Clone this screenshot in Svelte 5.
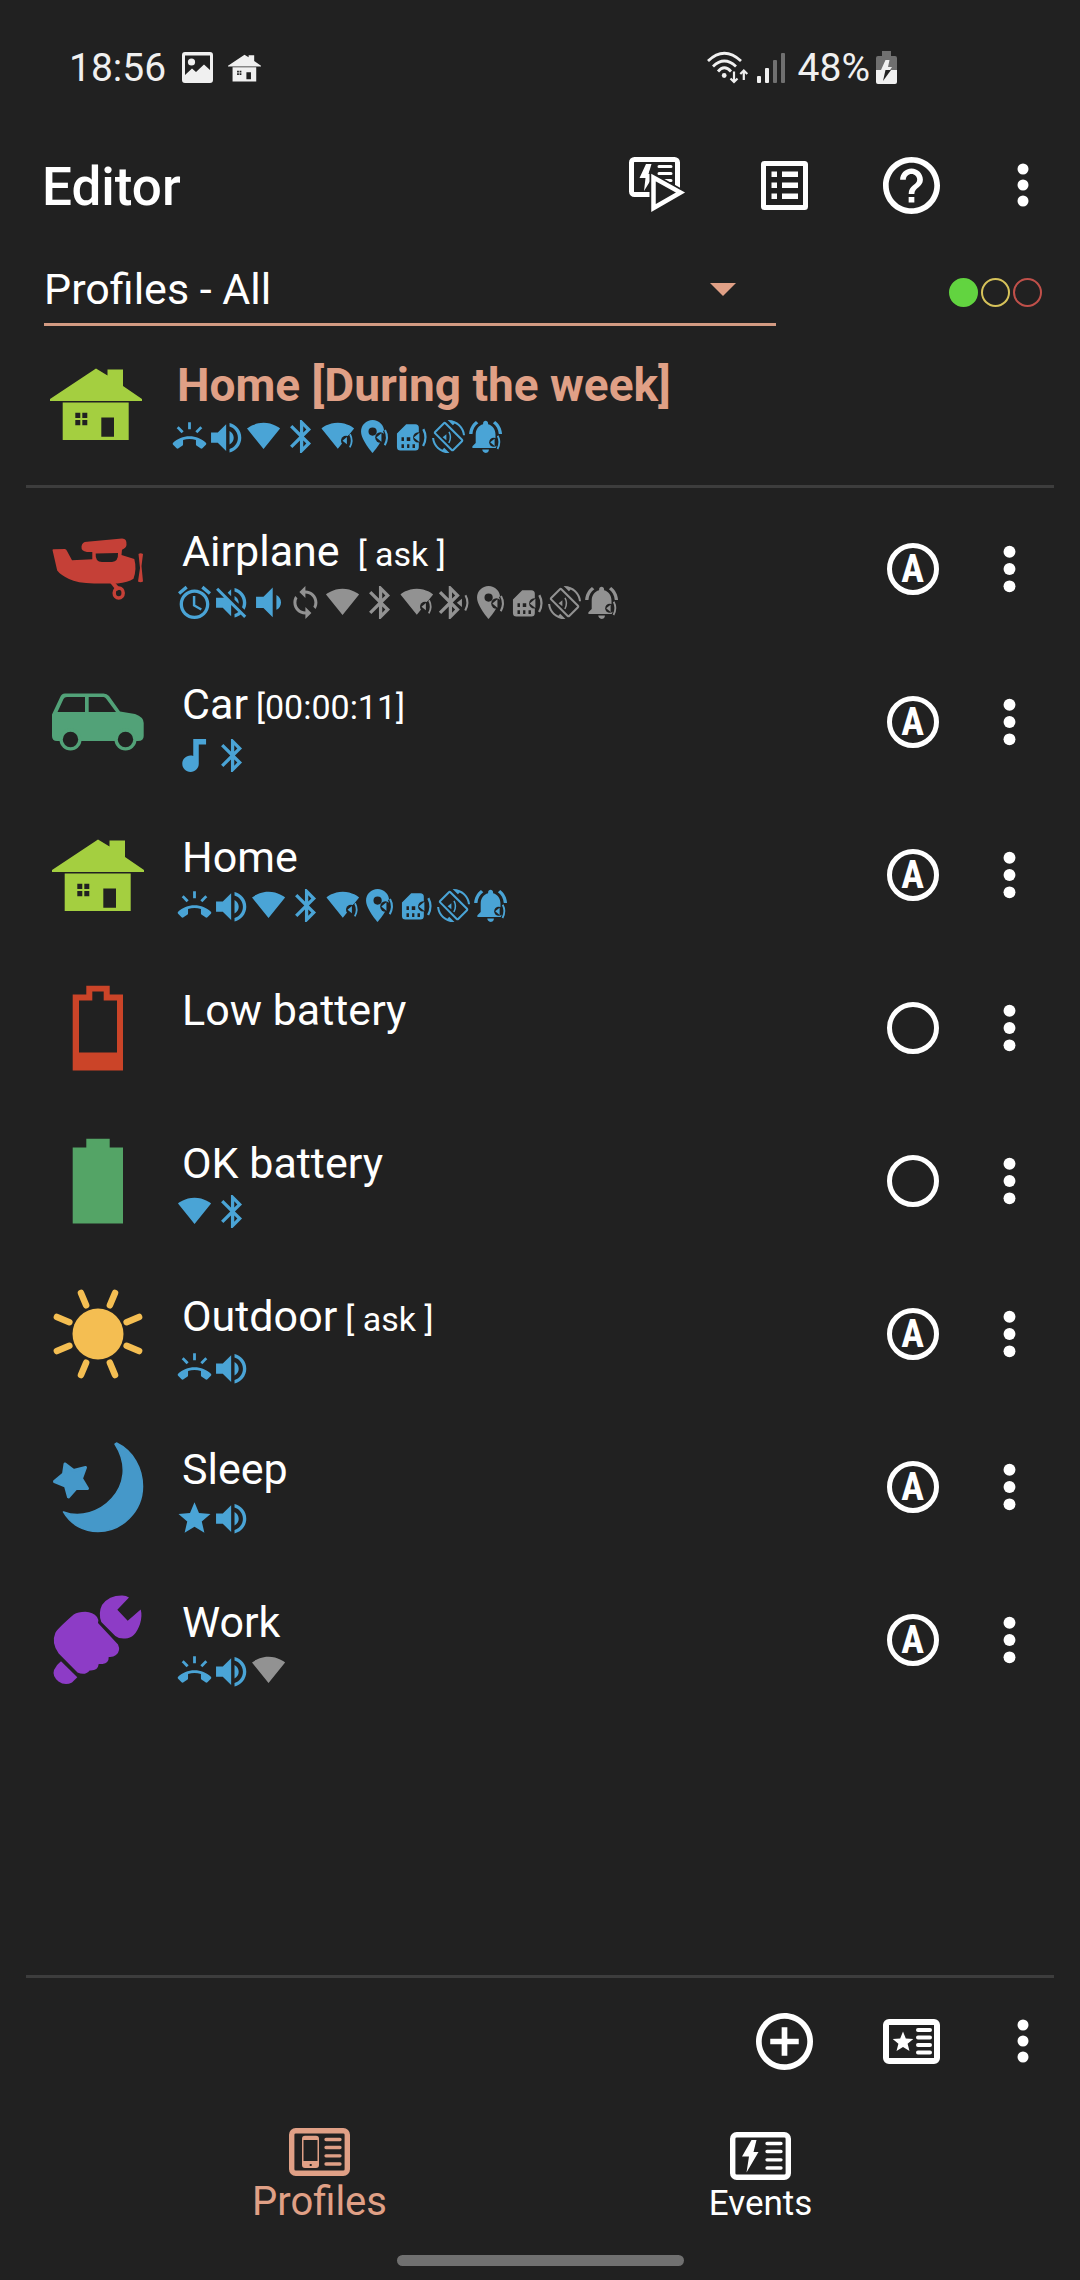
<script>
  // Indicator glyphs: path on a 24-unit grid, scaled by s and moved by x/y inside a 37x34 cell.
  // "sound" places the small speaker overlay that marks on/off parameters.
  const bluetoothPath =
    'M17.71 7.71L12 2h-1v7.59L6.41 5 5 6.41 10.59 12 5 17.59 6.41 19 11 14.41V22h1l5.71-5.71-4.3-4.29 4.3-4.29zM13 5.83l1.88 1.88L13 9.59V5.83zm1.88 10.46L13 18.17v-3.76l1.88 1.88z';
  const wifiPath =
    'M12.01 21.49L23.64 7c-.45-.34-4.93-4-11.64-4C5.28 3 .81 6.66.36 7l11.63 14.49.01.01.01-.01z';

  const glyphs = {
    ring: {
      d: 'M23.71 16.67C20.66 13.78 16.54 12 12 12 7.46 12 3.34 13.78.29 16.67c-.18.18-.29.43-.29.71 0 .28.11.53.29.71l2.48 2.48c.18.18.43.29.71.29.27 0 .52-.11.7-.28.79-.74 1.69-1.36 2.66-1.85.33-.16.56-.5.56-.9v-3.1c1.45-.48 3-.73 4.6-.73s3.15.25 4.6.72v3.1c0 .39.23.74.56.9.98.49 1.87 1.12 2.66 1.85.18.18.43.28.7.28.28 0 .53-.11.71-.29l2.48-2.48c.18-.18.29-.43.29-.71 0-.28-.12-.52-.3-.7zM21.16 6.26l-1.41-1.41-3.56 3.55 1.41 1.41s3.45-3.52 3.56-3.55zM13 2h-2v5h2V2zM6.4 9.81L7.81 8.4 4.26 4.84 2.84 6.26c.11.03 3.56 3.55 3.56 3.55z',
      s: 1.4, x: 1.7, y: -0.5
    },
    volume: {
      d: 'M3 9v6h4l5 5V4L7 9H3zm13.5 3c0-1.77-1.02-3.29-2.5-4.03v8.05c1.48-.73 2.5-2.25 2.5-4.02zM14 3.23v2.06c2.89.86 5 3.54 5 6.71s-2.11 5.85-5 6.71v2.06c4.01-.91 7-4.49 7-8.77s-2.99-7.86-7-8.77z',
      s: 1.68, x: -2, y: -2.5
    },
    wifi: { d: wifiPath, s: 1.42, x: 1.5, y: -1.4 },
    bluetooth: { d: bluetoothPath, s: 1.65, x: -0.2, y: -3.3 },
    wifiSound: { d: wifiPath, s: 1.4, x: 2, y: -1.4, sound: { x: 24.5, y: 20.7, s: 1, cut: 5 } },
    bluetoothSound: { d: bluetoothPath, s: 1.65, x: -4.4, y: -3.3, sound: { x: 23, y: 16.8, s: 1.15, cut: 0 } },
    place: {
      d: 'M12 2C8.13 2 5 5.13 5 9c0 5.25 7 13 7 13s7-7.75 7-13c0-3.87-3.13-7-7-7zm0 9.5a2.5 2.5 0 010-5 2.5 2.5 0 010 5z',
      s: 1.65, x: -3.2, y: -3.3, sound: { x: 21.5, y: 17.5, s: 1.15, cut: 4.5 }
    },
    sim: {
      d: 'M6.3 2H11.5a2 2 0 012 2v11a2 2 0 01-2 2H3a2 2 0 01-2-2V7.3zM3.6 9.5v2.1h1.4V9.500zM6.600 9.500v2.1h2V9.500zM3.6 13.5V15.600h1.4v-2.1zM6.800 13.5V15.600h1.300v-2.1zM9.900 13.5V15.600h1.4v-2.1z',
      s: 1.75, x: 2.2, y: 0.7, sound: { x: 22, y: 17.4, s: 1.28, cut: 4 }
    },
    rotate: {
      d: 'M16.48 2.52c3.27 1.55 5.61 4.72 5.97 8.48h1.5C23.44 4.84 18.29 0 12 0l-.66.03 3.81 3.81 1.33-1.32zm-6.25-.77c-.59-.59-1.54-.59-2.12 0L1.75 8.11c-.59.59-.59 1.54 0 2.12l12.02 12.02c.59.59 1.54.59 2.12 0l6.36-6.36c.59-.59.59-1.54 0-2.12L10.23 1.75zm4.6 19.44L2.81 9.17l6.36-6.36 12.02 12.02-6.36 6.36zm-7.31.29C4.25 19.94 1.91 16.76 1.55 13H.05C.56 19.16 5.71 24 12 24l.66-.03-3.81-3.81-1.33 1.32z',
      s: 1.38, x: 2, y: 0, sound: { x: 13.5, y: 17.3, s: 0.85, cut: 0 }
    },
    bell: {
      d: 'M7.58 4.08L6.15 2.65C3.75 4.48 2.17 7.3 2.03 10.5h2c.15-2.65 1.51-4.97 3.55-6.42zm12.39 6.42h2c-.15-3.2-1.73-6.02-4.12-7.85l-1.42 1.43c2.02 1.45 3.39 3.77 3.54 6.42zM18 11c0-3.07-1.64-5.64-4.5-6.32V4c0-.83-.67-1.5-1.5-1.5s-1.5.67-1.5 1.5v.68C7.63 5.36 6 7.92 6 11v5l-2 2v1h16v-1l-2-2v-5zm-6 11c.14 0 .27-.01.4-.04.65-.14 1.18-.58 1.44-1.18.1-.24.15-.5.15-.78h-4c.01 1.1.9 2 2.01 2z',
      s: 1.65, x: -1.2, y: -3.4, sound: { x: 24.2, y: 22.3, s: 1, cut: 4.5 }
    },
    alarm: {
      d: 'M22 5.72l-4.6-3.86-1.29 1.53 4.6 3.86L22 5.72zM7.88 3.39L6.6 1.86 2 5.71l1.29 1.53 4.59-3.85zM12.5 8H11v6l4.75 2.85.75-1.23-4-2.37V8zM12 4c-4.97 0-9 4.03-9 9s4.02 9 9 9c4.97 0 9-4.03 9-9s-4.03-9-9-9zm0 16c-3.87 0-7-3.13-7-7s3.13-7 7-7 7 3.13 7 7-3.13 7-7 7z',
      s: 1.65, x: -1.3, y: -3.2
    },
    volumeOff: {
      d: 'M16.5 12c0-1.77-1.02-3.29-2.5-4.03v2.21l2.45 2.45c.03-.2.05-.41.05-.63zm2.5 0c0 .94-.2 1.82-.54 2.64l1.51 1.51C20.63 14.91 21 13.5 21 12c0-4.28-2.99-7.86-7-8.77v2.06c2.89.86 5 3.54 5 6.71zM4.27 3L3 4.27 7.73 9H3v6h4l5 5v-6.73l4.25 4.25c-.67.52-1.42.93-2.25 1.18v2.06c1.38-.31 2.63-.95 3.69-1.81L19.73 21 21 19.73l-9-9L4.27 3zM12 4L9.91 6.09 12 8.18V4z',
      s: 1.68, x: -2, y: -3.4
    },
    volumeLow: {
      d: 'M18.5 12c0-1.77-1.02-3.29-2.5-4.03v8.05c1.48-.73 2.5-2.25 2.5-4.02zM5 9v6h4l5 5V4L9 9H5z',
      s: 1.85, x: -3.2, y: -5.8
    },
    sync: {
      d: 'M12 4V1L8 5l4 4V6c3.31 0 6 2.69 6 6 0 1.01-.25 1.97-.7 2.8l1.46 1.46C19.54 15.03 20 13.57 20 12c0-4.42-3.58-8-8-8zm0 14c-3.31 0-6-2.69-6-6 0-1.01.25-1.97.7-2.8L5.24 7.74C4.46 8.97 4 10.43 4 12c0 4.42 3.58 8 8 8v3l4-4-4-4v3z',
      s: 1.5, x: 0.4, y: -1.5
    },
    music: {
      d: 'M12 3v9.26c-.5-.17-1-.26-1.5-.26C8 12 6 14 6 16.5S8 21 10.5 21s4.5-2 4.5-4.5V6h4V3h-7z',
      s: 1.83, x: -4.7, y: -5.5
    },
    star: {
      d: 'M12 17.27L18.18 21l-1.64-7.03L22 9.24l-7.19-.61L12 2 9.19 8.63 2 9.24l5.46 4.73L5.82 21z',
      s: 1.6, x: -0.7, y: -1.9
    }
  };

  const homeSet = ['ring', 'volume', 'wifi', 'bluetooth', 'wifiSound', 'place', 'sim', 'rotate', 'bell'];

  const profiles = [
    {
      name: 'Airplane', note: '[ ask ]', wide: true, icon: 'plane', auto: true,
      on: ['alarm', 'volumeOff', 'volumeLow'],
      off: ['sync', 'wifi', 'bluetooth', 'wifiSound', 'bluetoothSound', 'place', 'sim', 'rotate', 'bell']
    },
    { name: 'Car', note: '[00:00:11]', icon: 'car', auto: true, on: ['music', 'bluetooth'], off: [] },
    { name: 'Home', icon: 'house', auto: true, on: homeSet, off: [] },
    { name: 'Low battery', icon: 'low', auto: false, on: [], off: [] },
    { name: 'OK battery', icon: 'full', auto: false, on: ['wifi', 'bluetooth'], off: [] },
    { name: 'Outdoor', note: '[ ask ]', icon: 'sun', auto: true, on: ['ring', 'volume'], off: [] },
    { name: 'Sleep', icon: 'moon', auto: true, on: ['star', 'volume'], off: [] },
    { name: 'Work', icon: 'work', auto: true, on: ['ring', 'volume'], off: ['wifi'] }
  ];

  const rays = [22.5, 67.5, 112.5, 157.5, 202.5, 247.5, 292.5, 337.5];
</script>

{#snippet glyph(name, off)}
  {@const g = glyphs[name]}
  <svg class="glyph" class:off viewBox="0 0 37 34" aria-hidden="true">
    <path d={g.d} transform="translate({g.x} {g.y}) scale({g.s})" fill="currentColor" fill-rule="evenodd" />
    {#if g.sound}
      <g transform="translate({g.sound.x} {g.sound.y}) scale({g.sound.s})">
        {#if g.sound.cut}
          <circle class="cut" cx="2.5" cy="0" r={g.sound.cut} />
          <path class="halo" d="M6.5 -6.5Q10 0 6.3 6.7" />
        {/if}
        <path d="M-1 0L3.4 -3.6V3.6Z" fill="currentColor" />
        <path d="M6.5 -6.5Q10 0 6.3 6.7" fill="none" stroke="currentColor" stroke-width="1.8" />
      </g>
    {/if}
  </svg>
{/snippet}

{#snippet strip(on, off)}
  <div class="strip">
    {#each on as name}{@render glyph(name, false)}{/each}
    {#each off as name}{@render glyph(name, true)}{/each}
  </div>
{/snippet}

{#snippet picture(kind)}
  <svg class="picture {kind}" viewBox="0 0 92 92" aria-hidden="true">
    {#if kind === 'house'}
      <path d="M0 43v-2L46 10.5l11.5 7v-6H73V28l19 13v2z" />
      <path fill-rule="evenodd" d="M12.7 44.5h66V82h-66zM25.3 54.8v5.2h5v-5.2zM32.3 54.8v5.2h5v-5.2zM25.3 62v5.2h5V62zM32.3 62v5.2h5V62zM51.3 59.5v19.3H64V59.5z" />
    {:else if kind === 'plane'}
      <path fill-rule="evenodd" d="M.5 27Q.5 26 2 26.2L13 26Q14.500 26.500 15 28L20 37.2 40.300 36.300V29H35Q29 28 29.500 23.500T35 18.800L70 15.600Q75 15.500 74.500 22 74 25 70 26.800L69.500 32 82.300 36Q85 46 81.500 55.800 76 59.500 65.500 60.500H42Q25 60 17 56 8 51.500 5.200 47.500zM43.700 30.500Q43 39 50 39H60Q66.500 38.500 66 30z" />
      <path d="M86.500 31Q88.500 29.500 91 31L89.500 43 91 58.500Q88.500 60 86 58.500L88 45z" />
      <path d="M57.500 59l6 1 5 6-4 2z" />
      <ellipse cx="66.700" cy="70" rx="4.500" ry="5" fill="none" stroke="currentColor" stroke-width="3.500" />
    {:else if kind === 'car'}
      <path fill-rule="evenodd" d="M13 17.500H51.500Q55 17.500 57 20L68 35.500 83 38Q91.700 41 91.700 47V60Q91.700 65 86 65H5Q0 65 0 60V38.500L8 21.500Q9.500 17.500 13 17.500zM5.500 36H33V21H15Q12.500 21 11.500 23zM36.700 36H64L54 22.500Q53 21 51.500 21H36.700z" />
      <circle cx="18.500" cy="63.500" r="11" /><circle cx="73.500" cy="63.500" r="11" />
      <circle class="cut" cx="18.500" cy="63.500" r="7.700" /><circle class="cut" cx="73.500" cy="63.500" r="7.700" />
    {:else if kind === 'low'}
      <path fill-rule="evenodd" d="M34.300 3.800H57.700V12.500H71V88.500H20.700V12.500H34.300zM40.300 9.500V18.500H27V70.500H65V18.500H51.700V9.500z" />
    {:else if kind === 'full'}
      <path d="M34.300 3.800H57.700V12.500H71V88.500H20.700V12.500H34.300z" />
    {:else if kind === 'sun'}
      <circle cx="46" cy="46" r="25.500" />
      {#each rays as angle}
        <path d="M46 1.500V15" transform="rotate({angle} 46 46)" stroke="currentColor" stroke-width="6.500" stroke-linecap="round" />
      {/each}
    {:else if kind === 'moon'}
      <path d="M64.500 2C81 10 90.500 27 90.500 45.500 90.500 70 70 90.500 46 90.500 32 90.500 19 84 11.500 71 45 84 90 45 63 3z" stroke="currentColor" stroke-width="1.500" stroke-linejoin="round" />
      <path d="M2.500 40.500L11.500 33 13 23 21.500 29.500 33.500 26.500 29.500 37.500 35.500 47.500 24 47.500 16.500 56 13.500 45z" stroke="currentColor" stroke-width="3" stroke-linejoin="round" />
    {:else}
      <path d="M49.300 28Q46 19 50 11 57 1.500 70 1.600 74 1.500 77 3.500L65.300 15.800 75.700 26.800 88.700 15.500Q90.500 22 88 30 83 44.500 73.300 44.500 67 45 63.300 42z" />
      <path d="M33.300 17.800Q41 18 45 23 47 25.500 46 29L66 50.500Q69 57 64 61 61 63.500 56.700 63 57 69 50.500 70 47 70 46.700 70 46 77 37.700 76.500 33 82 25.500 78.500L6.700 59.500Q-1 49 3.300 39 5 35 21.700 20.500 26 17.800 33.300 17.800z" />
      <path d="M9 67.200L25.300 83.200 20 88.500Q13 92 6.500 87.500 0 82 2 76 4 71 9 67.200z" />
    {/if}
  </svg>
{/snippet}

{#snippet dots()}
  <svg class="dots" viewBox="0 0 12 48" aria-hidden="true">
    <circle cx="6" cy="8" r="5.500" /><circle cx="6" cy="24" r="5.500" /><circle cx="6" cy="40" r="5.500" />
  </svg>
{/snippet}

<div class="app">
  <div class="status">
    <span>18:56</span>
    <svg class="photo" viewBox="0 0 31 31" aria-hidden="true">
      <path fill-rule="evenodd" d="M3 0H28Q31 0 31 3V28Q31 31 28 31H3Q0 31 0 28V3Q0 0 3 0zM3 3.500V23L10 16.500 14 20 22 12.500 28 18V3.500z" />
      <circle cx="9.500" cy="10" r="3.600" />
    </svg>
    <svg class="mini" viewBox="0 0 92 92" aria-hidden="true">
      <path d="M0 43v-2L46 10.500l11.500 7v-6H73V28l19 13v2z" />
      <path fill-rule="evenodd" d="M12.700 45.500h66V85h-66zM25.300 54.800v5.200h5v-5.200zM32.300 54.800v5.200h5v-5.200zM25.300 62v5.200h5V62zM32.300 62v5.200h5V62zM51.300 59.500v19.300H64V59.500z" />
    </svg>
    <span class="spacer"></span>
    <svg class="net" viewBox="0 0 42 33" aria-hidden="true">
      <g fill="none" stroke="currentColor" stroke-width="2.800">
        <path d="M1 10Q17.200 -5.500 34 10M6 15.500Q17.200 4.500 29 15.500M11 20.500Q17.200 13 24 20.500" />
        <path d="M27 20.500V30M23.500 27.500L27 31 30.500 27.500M36.800 29V20M33.300 23L36.800 19.500 40.300 23" stroke-width="2.200" />
      </g>
      <circle cx="17.200" cy="24.500" r="2.400" />
    </svg>
    <svg class="signal" viewBox="0 0 28 33" aria-hidden="true">
      <rect x="0" y="25" width="4" height="7" rx="1" /><rect x="8" y="17" width="4" height="15" rx="1" />
      <g class="dim"><rect x="16" y="9" width="4" height="23" rx="1" /><rect x="24" y="2" width="4" height="30" rx="1" /></g>
    </svg>
    <span>48%</span>
    <svg class="cell" viewBox="0 0 21 33" aria-hidden="true">
      <path class="dim" d="M6 0h9v5h4q2 0 2 2v12H0V7q0-2 2-2h4z" />
      <path d="M0 19h21v12q0 2-2 2H2q-2 0-2-2z" />
      <path d="M9.500 9h4l-1.500 7h4l-2 3H5z" />
      <path class="cut" d="M9.500 19h5.500L7 30z" />
    </svg>
  </div>

  <header class="toolbar">
    <h1>Editor</h1>
    <button class="action" aria-label="Run events">
      <svg class="run" viewBox="0 -5 60 69" aria-hidden="true">
        <rect x="3.500" y="3.500" width="46" height="35" rx="3" fill="none" stroke="currentColor" stroke-width="5" />
        <path d="M18 8h5.500l-3 10h6L16 35l1.500-13h-6z" />
        <path d="M31 10.500H43M31 17.500H43M34 24.500H43" stroke="currentColor" stroke-width="3" stroke-linecap="round" />
        <path class="backing" d="M25.500 21.500V52L52.500 36.500Z" />
        <path class="front" d="M25.500 21.500V52L52.500 36.500Z" />
      </svg>
    </button>
    <button class="action" aria-label="Activity log">
      <svg class="log" viewBox="0 0 47 49" aria-hidden="true">
        <rect x="2.500" y="2.500" width="42" height="44" rx="1" fill="none" stroke="currentColor" stroke-width="5" />
        <path d="M10.500 10.500H16V16H10.500zM21 10.500H37V16H21zM10.500 21.500H16V27H10.500zM21 21.500H37V27H21zM10.500 32.500H16V38H10.500zM21 32.500H37V38H21z" />
      </svg>
    </button>
    <button class="action" aria-label="Help">
      <svg class="round" viewBox="2 2 20 20" aria-hidden="true">
        <path d="M11 18h2v-2h-2v2zm1-16C6.480 2 2 6.480 2 12s4.480 10 10 10 10-4.480 10-10S17.520 2 12 2zm0 18c-4.410 0-8-3.590-8-8s3.590-8 8-8 8 3.590 8 8-3.590 8-8 8zm0-14c-2.210 0-4 1.790-4 4h2c0-1.100.900-2 2-2s2 .900 2 2c0 2-3 1.750-3 5h2c0-2.250 3-2.500 3-5 0-2.210-1.790-4-4-4z" />
      </svg>
    </button>
    <button class="more" aria-label="More options">{@render dots()}</button>
  </header>

  <div class="filter">
    <div class="picker">
      <select aria-label="Filter"><option>Profiles - All</option></select>
      <svg class="caret" viewBox="0 0 26 13" aria-hidden="true"><path d="M0 0H26L13 13z" /></svg>
    </div>
    <div class="lights" role="img" aria-label="Events running">
      <span class="light green"></span><span class="light yellow"></span><span class="light red"></span>
    </div>
  </div>

  <section class="current">
    {@render picture('house')}
    <div>
      <h2>Home [During the week]</h2>
      {@render strip(homeSet, [])}
    </div>
  </section>

  <ul class="list">
    {#each profiles as p}
      <li>
        {@render picture(p.icon)}
        <div class="info">
          <div class="name" class:wide={p.wide}><span>{p.name}</span>{#if p.note}<small>{p.note}</small>{/if}</div>
          {@render strip(p.on, p.off)}
        </div>
        <button class="option" aria-label="Show in activator: {p.name}">
          <span class="badge">{p.auto ? 'A' : ''}</span>
        </button>
        <button class="option big" aria-label="Options for {p.name}">{@render dots()}</button>
      </li>
    {/each}
  </ul>

  <div class="toolbar lower">
    <button class="action" aria-label="Add profile">
      <svg class="round" viewBox="2 2 20 20" aria-hidden="true">
        <path d="M13 7h-2v4H7v2h4v4h2v-4h4v-2h-4V7zm-1-5C6.480 2 2 6.480 2 12s4.480 10 10 10 10-4.480 10-10S17.520 2 12 2zm0 18c-4.410 0-8-3.590-8-8s3.590-8 8-8 8 3.590 8 8-3.590 8-8 8z" />
      </svg>
    </button>
    <button class="action" aria-label="Default profile">
      <svg class="card" viewBox="0 0 57 45" aria-hidden="true">
        <rect x="3" y="3" width="51" height="39" rx="3" fill="none" stroke="currentColor" stroke-width="6" />
        <path d="M20 12.500l2.800 7 7.500.500-5.700 4.800 1.900 7.200-6.500-4-6.500 4 1.900-7.200-5.700-4.800 7.500-.500z" />
        <path d="M35 11H47M35 18.500H47M35 26H47M35 33.500H47" stroke="currentColor" stroke-width="4" stroke-linecap="round" />
      </svg>
    </button>
    <button class="more" aria-label="More profile options">{@render dots()}</button>
  </div>

  <nav>
    <button class="tab selected" aria-current="page">
      <svg viewBox="0 0 61 48" aria-hidden="true">
        <rect x="2.700" y="2.700" width="55.600" height="42.600" rx="4" fill="none" stroke="currentColor" stroke-width="5.400" />
        <path fill-rule="evenodd" d="M16 7.700H27Q30 7.700 30 10.700V37Q30 40 27 40H16Q13 40 13 37V10.700Q13 7.700 16 7.700zM14.500 12V33H28.500V12zM20.700 36v2h2v-2z" />
        <path d="M37 11.500H51M37 19.500H51M37 27.800H51M37 36H51" stroke="currentColor" stroke-width="3.300" stroke-linecap="round" />
      </svg>
      <span>Profiles</span>
    </button>
    <button class="tab">
      <svg viewBox="0 0 61 48" aria-hidden="true">
        <rect x="2.700" y="2.700" width="55.600" height="42.600" rx="4" fill="none" stroke="currentColor" stroke-width="5.400" />
        <path d="M21.500 8h5l-3 12h5L16.500 40.500 19 24.500H12z" />
        <path d="M37 11.500H51M37 19.500H51M37 27.800H51M37 36H51" stroke="currentColor" stroke-width="3.300" stroke-linecap="round" />
      </svg>
      <span>Events</span>
    </button>
  </nav>
  <div class="handle"></div>
</div>

<style>
  :global(body) {
    background: #212121;
  }
  .app {
    --bg: #212121;
    --accent: #e0a086;
    --blue: #4aa4d6;
    display: flex;
    flex-direction: column;
    min-height: 100vh;
    box-sizing: border-box;
    padding-bottom: 14px;
    background: var(--bg);
    color: #fff;
    font-family: Roboto, "Liberation Sans", sans-serif;
  }
  svg {
    display: block;
    flex: none;
    fill: currentColor;
    overflow: visible;
  }
  button {
    display: flex;
    align-items: center;
    justify-content: center;
    padding: 0;
    border: 0;
    background: none;
    color: inherit;
    font: inherit;
  }
  .cut {
    fill: var(--bg);
  }
  .halo {
    fill: none;
    stroke: var(--bg);
    stroke-width: 4;
  }

  .status {
    display: flex;
    align-items: center;
    height: 135px;
    padding: 0 183px 0 69px;
    color: #f0f0f0;
    font-size: 39px;
  }
  .spacer {
    flex: 1;
  }
  .photo {
    width: 31px;
    margin-left: 16px;
  }
  .mini {
    width: 33px;
    margin-left: 15px;
  }
  .net {
    width: 42px;
    margin-right: 8px;
  }
  .signal {
    width: 28px;
    margin-right: 13px;
  }
  .cell {
    width: 21px;
    margin-left: 6px;
  }
  .dim {
    fill: #707070;
  }

  .toolbar {
    display: flex;
    align-items: center;
    height: 100px;
    padding: 0 10px 0 42px;
  }
  h1 {
    flex: 1;
    margin: 0;
    padding-top: 4px;
    font-size: 53px;
    font-weight: 500;
  }
  .action {
    width: 127px;
    height: 100px;
  }
  .more {
    width: 95px;
    height: 100px;
  }
  .dots {
    width: 12px;
  }
  .run {
    width: 60px;
  }
  .log {
    width: 47px;
  }
  .round,
  .card {
    width: 57px;
  }
  .backing {
    fill: var(--bg);
    stroke: var(--bg);
    stroke-width: 8;
  }
  .front {
    fill: none;
    stroke: currentColor;
    stroke-width: 4.500;
  }

  .filter {
    display: flex;
    align-items: center;
    gap: 173px;
    padding: 20px 38px 0 44px;
  }
  .picker {
    flex: 1;
    display: grid;
    align-items: center;
    border-bottom: 3px solid #d39b83;
  }
  .picker > * {
    grid-area: 1 / 1;
  }
  select {
    appearance: none;
    width: 100%;
    height: 68px;
    padding: 0;
    border: 0;
    background: none;
    color: #fff;
    font: 43px Roboto, "Liberation Sans", sans-serif;
  }
  .caret {
    width: 26px;
    margin-right: 40px;
    justify-self: end;
    color: var(--accent);
    pointer-events: none;
  }
  .lights {
    display: flex;
    gap: 3px;
    padding-top: 3px;
  }
  .light {
    width: 29px;
    height: 29px;
    box-sizing: border-box;
    border: 2px solid;
    border-radius: 50%;
  }
  .green {
    border-color: #62d440;
    background: #62d440;
  }
  .yellow {
    border-color: #d6c25a;
  }
  .red {
    border-color: #c0504a;
  }

  .current {
    display: flex;
    align-items: center;
    gap: 35px;
    height: 159px;
    padding-left: 50px;
  }
  .current .picture {
    margin-bottom: 4px;
  }
  h2 {
    margin: 0 0 8px;
    color: var(--accent);
    font-size: 46px;
    line-height: 54px;
    font-weight: 700;
  }
  .strip {
    display: flex;
    margin-left: -6px;
    color: var(--blue);
  }
  .glyph {
    width: 37px;
    height: 34px;
  }
  .glyph.off {
    color: #929292;
  }

  .picture {
    width: 92px;
    height: 92px;
  }
  .house {
    color: #a4cf40;
  }
  .plane {
    color: #c54037;
  }
  .car {
    color: #52a278;
  }
  .low {
    color: #cb4428;
  }
  .full {
    color: #54a466;
  }
  .sun {
    color: #f4be52;
  }
  .moon {
    color: #4598c9;
  }
  .work {
    color: #8d3cc6;
  }

  .list {
    flex: 1;
    margin: 0 26px;
    padding: 4px 0 0;
    border-top: 3px solid #3d3d3d;
    border-bottom: 3px solid #3d3d3d;
    list-style: none;
  }
  li {
    display: flex;
    align-items: center;
    height: 153px;
    margin-right: -4px;
    padding-left: 26px;
  }
  .info {
    flex: 1;
    align-self: start;
    padding: 34px 0 0 38px;
  }
  .name {
    display: flex;
    align-items: baseline;
    gap: 8px;
    margin-bottom: 7px;
    font-size: 43px;
    line-height: 50px;
  }
  .name.wide {
    gap: 18px;
  }
  small {
    font-size: 34px;
  }
  .option {
    width: 97px;
    height: 97px;
  }
  .badge {
    display: flex;
    align-items: center;
    justify-content: center;
    width: 52px;
    height: 52px;
    box-sizing: border-box;
    border: 5px solid;
    border-radius: 50%;
    font: 700 38px "Liberation Sans Narrow", "Roboto Condensed", Roboto, sans-serif;
  }
  .big .dots {
    width: 13px;
  }

  .lower {
    justify-content: flex-end;
    height: 126px;
  }
  nav {
    display: flex;
    justify-content: center;
    align-items: flex-end;
    height: 121px;
    margin-bottom: 30px;
  }
  .tab {
    flex: 0 1 441px;
    flex-direction: column;
    gap: 3px;
    font-size: 35px;
    line-height: 42px;
  }
  .tab svg {
    width: 61px;
    height: 48px;
  }
  .tab.selected {
    color: var(--accent);
    font-size: 40px;
    line-height: 46px;
  }
  .handle {
    align-self: center;
    width: 287px;
    height: 11px;
    border-radius: 6px;
    background: #707070;
  }
</style>
